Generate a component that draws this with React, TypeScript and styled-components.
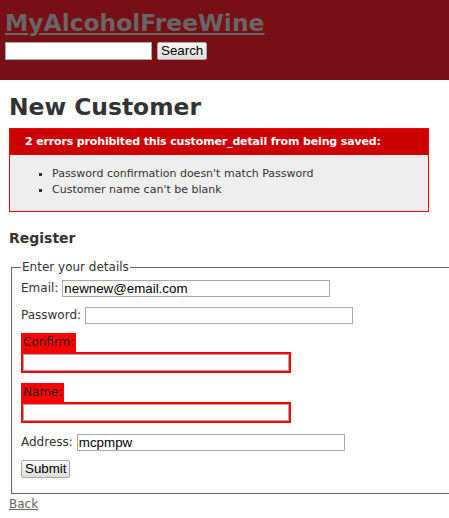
import React from "react";
import styled, { createGlobalStyle } from "styled-components";

const Global = createGlobalStyle`
  html, body { margin: 0; padding: 0; background: #fff; }
  body {
    color: #333;
    font-family: "DejaVu Sans", Verdana, sans-serif;
    font-size: 13px;
    line-height: 18px;
  }
`;

const Header = styled.header`
  background: #780f17;
  height: 80px;
  padding: 9px 5px 0;
  box-sizing: border-box;
`;

const SiteTitle = styled.a`
  display: inline-block;
  font-size: 23.4px;
  font-weight: bold;
  line-height: 28px;
  color: #666;
  text-decoration: underline;
`;

const SearchForm = styled.form`
  display: flex;
  align-items: center;
  gap: 5px;
  margin-top: 5px;
`;

const TextInput = styled.input<{ $w: number }>`
  width: ${(p) => p.$w}px;
  height: 18px;
  box-sizing: border-box;
  border: 1px solid #a9a9a9;
  padding: 0 1px;
  font-family: "Liberation Sans", Arial, sans-serif;
  font-size: 13.33px;
  color: #000;
  background: #fff;
  margin: 0;
`;

const Button = styled.button`
  height: 18px;
  box-sizing: border-box;
  border: 1px solid #a9a9a9;
  border-radius: 2px;
  background: linear-gradient(#f6f6f6, #dedede);
  font-family: "Liberation Sans", Arial, sans-serif;
  font-size: 13.33px;
  color: #000;
  padding: 0 3px;
  margin: 0;
  line-height: 14px;
`;

const Main = styled.main`
  padding: 0 9px;
`;

const H1 = styled.h1`
  font-size: 23.4px;
  font-weight: bold;
  line-height: 30px;
  margin: 12px 0 6px;
`;

const ErrorBox = styled.div`
  width: 420px;
  box-sizing: border-box;
  border: 1px solid red;
  background: #eee;
  padding-bottom: 13px;
`;

const ErrorTitle = styled.h2`
  margin: 0;
  background: #c00;
  color: #fff;
  font-size: 11px;
  letter-spacing: -0.15px;
  font-weight: bold;
  line-height: 16px;
  padding: 5px 15px;
  white-space: nowrap;
`;

const ErrorList = styled.ul`
  margin: 11px 0 0;
  padding-left: 42px;
  list-style: square;
  li {
    font-size: 11px;
    line-height: 16px;
  }
`;

const H3 = styled.h3`
  font-size: 14px;
  font-weight: bold;
  margin: 17px 0 11px;
  line-height: 18px;
`;

const Fieldset = styled.fieldset`
  margin: 0 0 0 2px;
  width: 460px;
  border: 1px solid #666;
  padding: 3px 9px 15px;
  box-sizing: border-box;
`;

const Legend = styled.legend`
  padding: 0 1px;
  font-size: 12px;
`;

const Row = styled.div`
  display: flex;
  align-items: center;
  gap: 4px;
  margin-bottom: 9px;
`;

const Label = styled.label`
  font-size: 12px;
`;

const ErrorField = styled.div`
  display: table;
  background: red;
  padding: 2px;
  color: #222;
`;

const ErrorGroup = styled.div`
  margin-bottom: 10px;
`;

const ErrorLabel = styled.label`
  font-size: 12px;
  line-height: 15px;
  display: block;
`;

const FieldInput = styled(TextInput)`
  display: block;
  height: 17px;
`;

const SubmitRow = styled.div`
  margin-top: 4px;
`;

const Back = styled.a`
  display: inline-block;
  color: #666;
  text-decoration: underline;
  font-size: 12px;
  margin-top: 1px;
`;

export default function App() {
  return (
    <>
      <Global />
      <Header>
        <SiteTitle href="#">MyAlcoholFreeWine</SiteTitle>
        <SearchForm onSubmit={(e) => e.preventDefault()}>
          <TextInput $w={147} type="text" />
          <Button type="submit">Search</Button>
        </SearchForm>
      </Header>
      <Main>
        <H1>New Customer</H1>
        <ErrorBox>
          <ErrorTitle>2 errors prohibited this customer_detail from being saved:</ErrorTitle>
          <ErrorList>
            <li>Password confirmation doesn't match Password</li>
            <li>Customer name can't be blank</li>
          </ErrorList>
        </ErrorBox>
        <H3>Register</H3>
        <Fieldset>
          <Legend>Enter your details</Legend>
          <Row>
            <Label>Email:</Label>
            <FieldInput $w={268} type="text" defaultValue="newnew@email.com" />
          </Row>
          <Row>
            <Label>Password:</Label>
            <FieldInput $w={268} type="password" />
          </Row>
          <ErrorGroup>
            <ErrorField>
              <ErrorLabel>Confirm:</ErrorLabel>
            </ErrorField>
            <ErrorField>
              <FieldInput $w={266} type="password" />
            </ErrorField>
          </ErrorGroup>
          <ErrorGroup>
            <ErrorField>
              <ErrorLabel>Name:</ErrorLabel>
            </ErrorField>
            <ErrorField>
              <FieldInput $w={266} type="text" />
            </ErrorField>
          </ErrorGroup>
          <Row>
            <Label>Address:</Label>
            <FieldInput $w={268} type="text" defaultValue="mcpmpw" />
          </Row>
          <SubmitRow>
            <Button type="submit">Submit</Button>
          </SubmitRow>
        </Fieldset>
        <Back href="#">Back</Back>
      </Main>
    </>
  );
}
